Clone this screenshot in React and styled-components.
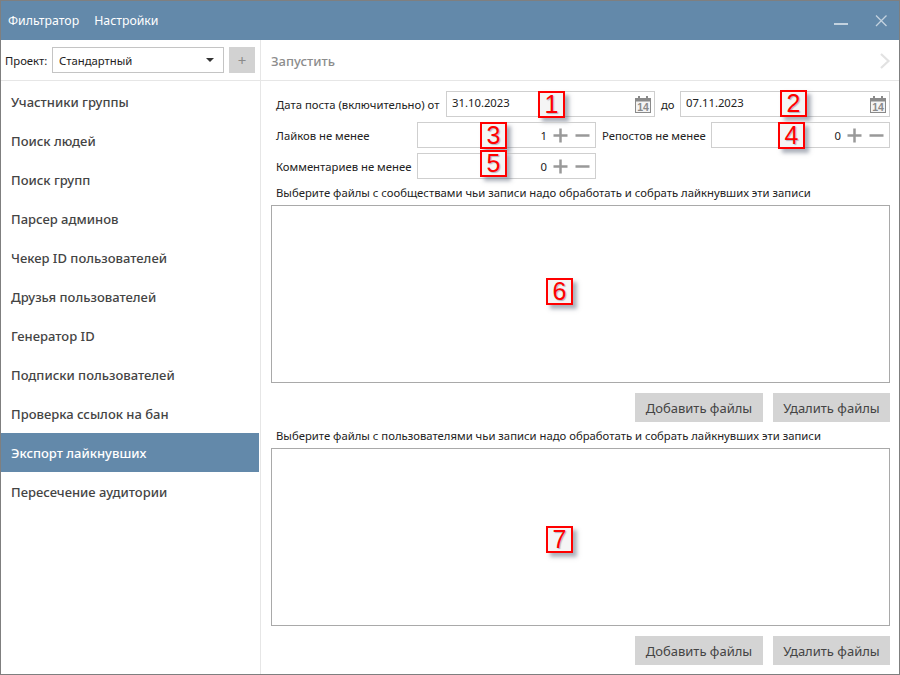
import styled, { createGlobalStyle } from "styled-components";

const GlobalStyle = createGlobalStyle`
  html, body {
    margin: 0;
    padding: 0;
    background: #fff;
  }
  * {
    box-sizing: border-box;
  }
`;

const Window = styled.div`
  width: 900px;
  height: 675px;
  display: flex;
  flex-direction: column;
  border: 1px solid #7f7f7f;
  background: #fff;
  font-family: "Noto Sans", "Open Sans", sans-serif;
  font-size: 11.3px;
  color: #333;
  overflow: hidden;
`;

const TitleBar = styled.div`
  height: 39px;
  flex: none;
  display: flex;
  align-items: center;
  background: #6389aa;
  color: #fff;
  padding: 0 11px 0 7px;
`;

const Menu = styled.div`
  display: flex;
  gap: 15px;
  font-size: 12.3px;
  flex: 1;
  padding-bottom: 1px;
`;

const WindowControls = styled.div`
  display: flex;
  align-items: center;
  gap: 26px;
`;

const Body = styled.div`
  flex: 1;
  display: flex;
  min-height: 0;
`;

const Sidebar = styled.div`
  width: 260px;
  flex: none;
  border-right: 1px solid #e6e6e6;
  display: flex;
  flex-direction: column;
`;

const ProjectBar = styled.div`
  height: 41px;
  flex: none;
  display: flex;
  align-items: center;
  padding: 0 0 1px 4px;
  border-bottom: 1px solid #e6e6e6;
`;

const ProjectLabel = styled.span`
  width: 47px;
  padding-top: 1px;
  color: #222;
`;

const Select = styled.div`
  width: 172px;
  height: 26px;
  display: flex;
  align-items: center;
  justify-content: space-between;
  padding: 1px 9px 0 6px;
  border: 1px solid #c4c4c4;
  color: #222;
`;

const Arrow = styled.span`
  width: 0;
  height: 0;
  border-left: 4px solid transparent;
  border-right: 4px solid transparent;
  border-top: 4px solid #333;
`;

const AddProject = styled.div`
  width: 26px;
  height: 26px;
  margin-left: 5px;
  display: flex;
  align-items: center;
  justify-content: center;
  background: #d2d2d2;
  color: #8a8a8a;
  font-size: 15px;
`;

const Nav = styled.div`
  padding-top: 1px;
  display: flex;
  flex-direction: column;
`;

const NavItem = styled.div`
  height: 39px;
  display: flex;
  align-items: center;
  padding-left: 10px;
  margin-right: 1px;
  font-size: 13px;
  font-weight: 500;
  color: ${(p) => (p.$active ? "#fff" : "#444")};
  background: ${(p) => (p.$active ? "#6389aa" : "transparent")};
`;

const Main = styled.div`
  flex: 1;
  display: flex;
  flex-direction: column;
  min-width: 0;
`;

const Toolbar = styled.div`
  height: 41px;
  flex: none;
  display: flex;
  align-items: center;
  justify-content: space-between;
  padding: 1px 8px 0 10px;
  border-bottom: 1px solid #e6e6e6;
  color: #8c8c8c;
  font-size: 13px;
  font-weight: 500;
`;

const Form = styled.div`
  padding: 10px 9px 0 10px;
  display: flex;
  flex-direction: column;
`;

const Row = styled.div`
  height: 26px;
  margin-bottom: 5px;
  display: flex;
  align-items: center;
`;

const Label = styled.span`
  width: ${(p) => p.$width}px;
  flex: none;
  padding-left: ${(p) => p.$pad ?? 0}px;
  color: #222;
  white-space: nowrap;
`;

const Field = styled.div`
  position: relative;
  width: ${(p) => p.$width}px;
  height: 26px;
  flex: none;
  display: flex;
  align-items: center;
  border: 1px solid #cfcfcf;
  color: #222;
`;

const DateText = styled.span`
  flex: 1;
  padding: 0 0 3px 5px;
`;

const CalendarSlot = styled.span`
  display: flex;
  margin-right: 3px;
`;

const NumberValue = styled.span`
  flex: 1;
  text-align: right;
  padding-right: 6px;
`;

const Steppers = styled.span`
  display: flex;
  align-items: center;
  gap: 7px;
  margin-right: 5px;
`;

const FileHint = styled.div`
  height: 21px;
  padding: 0 0 4px 5px;
  display: flex;
  align-items: center;
  color: #222;
  white-space: nowrap;
  margin-top: ${(p) => p.$top ?? 0}px;
`;

const FileBox = styled.div`
  position: relative;
  height: 178px;
  border: 1px solid #a9a9a9;
`;

const Buttons = styled.div`
  display: flex;
  justify-content: flex-end;
  gap: 10px;
  margin-top: 10px;
`;

const Button = styled.div`
  width: ${(p) => p.$width}px;
  height: 29px;
  display: flex;
  align-items: center;
  justify-content: center;
  background: #d4d4d4;
  color: #444;
  font-size: 13px;
`;

const Badge = styled.span`
  position: absolute;
  top: ${(p) => p.$top}px;
  left: ${(p) => p.$left}px;
  width: 27px;
  height: 27px;
  display: flex;
  align-items: center;
  justify-content: center;
  border: 2px solid #f00;
  background: #f5f5f5;
  color: #f00;
  font-family: "Liberation Sans", sans-serif;
  font-size: 25px;
  line-height: 1;
  text-shadow: 1px 1px 1px rgba(60, 60, 90, 0.35);
  box-shadow: 4px 4px 4px rgba(90, 100, 120, 0.5);
`;

const CalendarIcon = () => (
  <svg width="16" height="17" viewBox="0 0 16 17" fill="none">
    <rect x="0.500" y="2.500" width="15" height="14" fill="#f4f4f4" stroke="#8a8a8a" />
    <rect x="0" y="2" width="16" height="3.500" fill="#8a8a8a" />
    <rect x="3" y="0" width="2" height="4" fill="#8a8a8a" />
    <rect x="11" y="0" width="2" height="4" fill="#8a8a8a" />
    <text x="8" y="15" textAnchor="middle" fontSize="10.500" fontWeight="700" fill="#8a8a8a" fontFamily="Liberation Sans, sans-serif">14</text>
  </svg>
);

const PlusIcon = () => (
  <svg width="15" height="15" viewBox="0 0 15 15">
    <path d="M6.250 0.500h2.500v5.750h5.750v2.500h-5.750v5.750h-2.500v-5.750H0.500v-2.500h5.750z" fill="#999" />
  </svg>
);

const MinusIcon = () => (
  <svg width="15" height="15" viewBox="0 0 15 15">
    <rect x="0.500" y="6.250" width="14" height="2.500" fill="#999" />
  </svg>
);

const Stepper = () => (
  <Steppers>
    <PlusIcon />
    <MinusIcon />
  </Steppers>
);

const navItems = [
  "Участники группы",
  "Поиск людей",
  "Поиск групп",
  "Парсер админов",
  "Чекер ID пользователей",
  "Друзья пользователей",
  "Генератор ID",
  "Подписки пользователей",
  "Проверка ссылок на бан",
  "Экспорт лайкнувших",
  "Пересечение аудитории",
];

export default function App() {
  return (
    <>
      <GlobalStyle />
      <Window>
        <TitleBar>
          <Menu>
            <span>Фильтратор</span>
            <span>Настройки</span>
          </Menu>
          <WindowControls>
            <svg width="14" height="14" viewBox="0 0 14 14">
              <rect x="0" y="9" width="14" height="2" fill="#c3d2df" />
            </svg>
            <svg width="14" height="14" viewBox="0 0 14 14">
              <path d="M2 1.500l10.500 10.500M12.500 1.500L2 12" stroke="#c3d2df" strokeWidth="1.300" />
            </svg>
          </WindowControls>
        </TitleBar>
        <Body>
          <Sidebar>
            <ProjectBar>
              <ProjectLabel>Проект:</ProjectLabel>
              <Select>
                Стандартный
                <Arrow />
              </Select>
              <AddProject>+</AddProject>
            </ProjectBar>
            <Nav>
              {navItems.map((item) => (
                <NavItem key={item} $active={item === "Экспорт лайкнувших"}>
                  {item}
                </NavItem>
              ))}
            </Nav>
          </Sidebar>
          <Main>
            <Toolbar>
              Запустить
              <svg width="12" height="18" viewBox="0 0 12 18" fill="none">
                <path d="M2 2l7.500 7L2 16" stroke="#e2e2e2" strokeWidth="2.200" />
              </svg>
            </Toolbar>
            <Form>
              <Row>
                <Label $width={175} $pad={5}>Дата поста (включительно) от</Label>
                <Field $width={209}>
                  <DateText>31.10.2023</DateText>
                  <CalendarSlot><CalendarIcon /></CalendarSlot>
                  <Badge $top={-1} $left={91}>1</Badge>
                </Field>
                <Label $width={25} $pad={6}>до</Label>
                <Field $width={210}>
                  <DateText>07.11.2023</DateText>
                  <CalendarSlot><CalendarIcon /></CalendarSlot>
                  <Badge $top={-2} $left={99}>2</Badge>
                </Field>
              </Row>
              <Row>
                <Label $width={146} $pad={5}>Лайков не менее</Label>
                <Field $width={179}>
                  <NumberValue>1</NumberValue>
                  <Stepper />
                  <Badge $top={-1} $left={62}>3</Badge>
                </Field>
                <Label $width={115} $pad={6}>Репостов не менее</Label>
                <Field $width={179}>
                  <NumberValue>0</NumberValue>
                  <Stepper />
                  <Badge $top={-1} $left={66}>4</Badge>
                </Field>
              </Row>
              <Row>
                <Label $width={146} $pad={5}>Комментариев не менее</Label>
                <Field $width={179}>
                  <NumberValue>0</NumberValue>
                  <Stepper />
                  <Badge $top={-4} $left={62}>5</Badge>
                </Field>
              </Row>
              <FileHint>Выберите файлы с сообществами чьи записи надо обработать и собрать лайкнувших эти записи</FileHint>
              <FileBox>
                <Badge $top={72} $left={274}>6</Badge>
              </FileBox>
              <Buttons>
                <Button $width={128}>Добавить файлы</Button>
                <Button $width={117}>Удалить файлы</Button>
              </Buttons>
              <FileHint $top={5}>Выберите файлы с пользователями чьи записи надо обработать и собрать лайкнувших эти записи</FileHint>
              <FileBox>
                <Badge $top={77} $left={274}>7</Badge>
              </FileBox>
              <Buttons>
                <Button $width={128}>Добавить файлы</Button>
                <Button $width={117}>Удалить файлы</Button>
              </Buttons>
            </Form>
          </Main>
        </Body>
      </Window>
    </>
  );
}
